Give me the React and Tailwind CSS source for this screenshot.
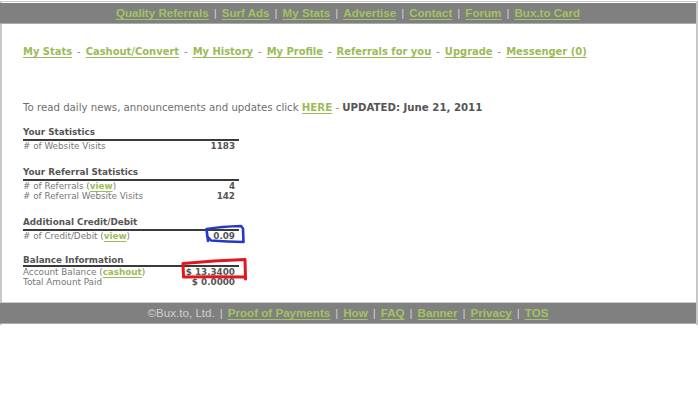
const G = "text-[#9bbb59] font-bold underline decoration-[#9bbb59] underline-offset-[2px]";

function TopSep() {
  return <span className="mx-[5px] font-normal text-[#d0d0d0]">|</span>;
}

function NavSep() {
  return <span className="mx-[5px] font-normal text-[#888]">-</span>;
}

function Section({ title, rows, mt, headH }) {
  return (
    <div className={`w-[216px] ${mt}`}>
      <div className={`${headH} leading-[10px] font-bold text-[#555] text-[8.8px]`}>{title}</div>
      <div className="h-[2px] bg-[#3a3a3a]" />
      {rows.map((r, i) => (
        <div key={i} className="flex justify-between h-[10px] leading-[10px] text-[8.8px] pr-[4px]">
          <span className="text-[#777]">{r[0]}</span>
          <span className="font-bold text-[#555]">{r[1]}</span>
        </div>
      ))}
    </div>
  );
}

export default function App() {
  const top = ["Quality Referrals", "Surf Ads", "My Stats", "Advertise", "Contact", "Forum", "Bux.to Card"];
  const nav = ["My Stats", "Cashout/Convert", "My History", "My Profile", "Referrals for you", "Upgrade", "Messenger (0)"];
  const foot = ["Proof of Payments", "How", "FAQ", "Banner", "Privacy", "TOS"];
  return (
    <div className="relative w-[699px] h-[418px] bg-white overflow-hidden pt-px font-['DejaVu_Sans',sans-serif]">
      <div className="w-[698px] border-x-2 border-t border-[#c8c8c8] pb-px">
        <div className="pt-px">
          <div className="-ml-[2px] w-[696px] h-[21px] bg-[#808080] border-b border-[#ababab] flex items-center justify-center font-['Liberation_Sans',sans-serif] text-[11.6px] font-bold leading-[14px]">
            {top.map((t, i) => (
              <span key={t} className="flex items-center">
                {i > 0 && <TopSep />}
                <span className="text-[#a2c363] underline decoration-[#a2c363] underline-offset-[2px]">{t}</span>
              </span>
            ))}
          </div>
        </div>

        <div className="h-[278px] pl-[21px] pt-[22px] flex flex-col">
          <div className="flex items-center h-[12px] leading-[12px] text-[9.95px]">
            {nav.map((t, i) => (
              <span key={t} className="flex items-center">
                {i > 0 && <NavSep />}
                <span className={G}>{t}</span>
              </span>
            ))}
          </div>

          <div className="mt-[44px] h-[12px] leading-[12px] text-[10.2px] text-[#6e6e6e] whitespace-nowrap">
            To read daily news, announcements and updates click{" "}
            <span className={G}>HERE</span>
            <span className="text-[#888]"> - </span>
            <span className="font-bold text-[#555]">UPDATED: June 21, 2011</span>
          </div>

          <Section
            mt="mt-[13px]"
            headH="h-[12px]"
            title="Your Statistics"
            rows={[["# of Website Visits", "1183"]]}
          />
          <Section
            mt="mt-[16px]"
            headH="h-[12px]"
            title="Your Referral Statistics"
            rows={[
              [<>
                # of Referrals (<span className={G}>view</span>)
              </>, "4"],
              ["# of Referral Website Visits", "142"],
            ]}
          />
          <Section
            mt="mt-[16px]"
            headH="h-[12px]"
            title="Additional Credit/Debit"
            rows={[[<>
              # of Credit/Debit (<span className={G}>view</span>)
            </>, "0.09"]]}
          />
          <Section
            mt="mt-[14px]"
            headH="h-[10px]"
            title="Balance Information"
            rows={[
              [<>
                Account Balance (<span className={G}>cashout</span>)
              </>, "$ 13.3400"],
              ["Total Amount Paid", "$ 0.0000"],
            ]}
          />
        </div>

        <div className="border-t border-[#cdcdcd]">
          <div className="-ml-[2px] w-[696px] h-[21px] bg-[#808080] border-b border-[#ababab] flex items-center justify-center font-['Liberation_Sans',sans-serif] text-[11.6px] leading-[14px]">
            <span className="text-[#cfcfcf]">©Bux.to, Ltd.</span>
            {foot.map((t) => (
              <span key={t} className="flex items-center font-bold">
                <TopSep />
                <span className="text-[#a2c363] underline decoration-[#a2c363] underline-offset-[2px]">{t}</span>
              </span>
            ))}
          </div>
        </div>
      </div>

      <svg className="absolute left-0 top-0 pointer-events-none" width="699" height="418" viewBox="0 0 699 418">
        <path
          d="M208 241 L206.5 229 Q222 226.5 241 226 L243 228.5 L243.5 242 Q228 241.5 211 240.5 L207 236"
          fill="none"
          stroke="#2638c8"
          strokeWidth="2.6"
          strokeLinejoin="round"
          strokeLinecap="round"
        />
        <path
          d="M183.5 277 L183 263.5 Q214 260.5 245 259.5 L245.5 279 M184 277 Q214 276.5 244.5 277"
          fill="none"
          stroke="#e3161e"
          strokeWidth="3"
          strokeLinejoin="round"
          strokeLinecap="round"
        />
      </svg>
    </div>
  );
}
